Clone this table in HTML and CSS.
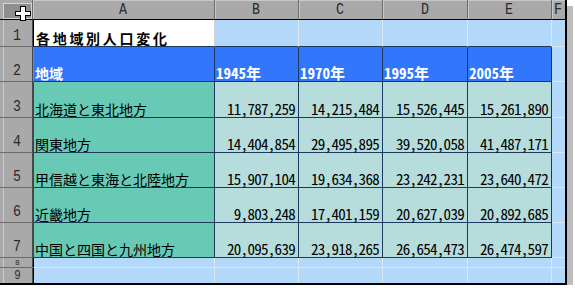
FILE: index.html
```html
<!DOCTYPE html>
<html lang="ja">
<head>
<meta charset="utf-8">
<title>各地域別人口変化</title>
<link rel="stylesheet" href="styles.css">
</head>
<body>
<div class="sheet">
  <div class="corner"><div class="corner-btn"></div></div>
  <div class="ch"><span class="hd">A</span></div>
  <div class="ch"><span class="hd">B</span></div>
  <div class="ch"><span class="hd">C</span></div>
  <div class="ch"><span class="hd">D</span></div>
  <div class="ch"><span class="hd">E</span></div>
  <div class="ch ch-last"><span class="hd">F</span></div>

  <div class="rh"><span class="hd">1</span></div>
  <div class="c a1 title">各地域別人口変化</div>
  <div class="c b1"></div>
  <div class="c b1"></div>
  <div class="c b1"></div>
  <div class="c b1"></div>
  <div class="c f"></div>

  <div class="rh"><span class="hd">2</span></div>
  <div class="c th th-a">地域</div>
  <div class="c th num-h">1945年</div>
  <div class="c th num-h">1970年</div>
  <div class="c th num-h">1995年</div>
  <div class="c th num-h">2005年</div>
  <div class="c f"></div>

  <div class="rh"><span class="hd">3</span></div>
  <div class="c ra">北海道と東北地方</div>
  <div class="c rn">11,787,259</div>
  <div class="c rn">14,215,484</div>
  <div class="c rn">15,526,445</div>
  <div class="c rn">15,261,890</div>
  <div class="c f"></div>

  <div class="rh"><span class="hd">4</span></div>
  <div class="c ra">関東地方</div>
  <div class="c rn">14,404,854</div>
  <div class="c rn">29,495,895</div>
  <div class="c rn">39,520,058</div>
  <div class="c rn">41,487,171</div>
  <div class="c f"></div>

  <div class="rh"><span class="hd">5</span></div>
  <div class="c ra">甲信越と東海と北陸地方</div>
  <div class="c rn">15,907,104</div>
  <div class="c rn">19,634,368</div>
  <div class="c rn">23,242,231</div>
  <div class="c rn">23,640,472</div>
  <div class="c f"></div>

  <div class="rh"><span class="hd">6</span></div>
  <div class="c ra">近畿地方</div>
  <div class="c rn">9,803,248</div>
  <div class="c rn">17,401,159</div>
  <div class="c rn">20,627,039</div>
  <div class="c rn">20,892,685</div>
  <div class="c f"></div>

  <div class="rh"><span class="hd">7</span></div>
  <div class="c ra">中国と四国と九州地方</div>
  <div class="c rn">20,095,639</div>
  <div class="c rn">23,918,265</div>
  <div class="c rn">26,654,473</div>
  <div class="c rn">26,474,597</div>
  <div class="c f"></div>

  <div class="rh rh-short"><span class="hd">8</span></div>
  <div class="c ea"></div>
  <div class="c e"></div>
  <div class="c e"></div>
  <div class="c e"></div>
  <div class="c e"></div>
  <div class="c f"></div>

  <div class="rh rh-last"><span class="hd">9</span></div>
  <div class="c ea last"></div>
  <div class="c e last"></div>
  <div class="c e last"></div>
  <div class="c e last"></div>
  <div class="c e last"></div>
  <div class="c f last"></div>

  <svg class="cursor" width="16" height="15" viewBox="0 0 16 15" shape-rendering="crispEdges" aria-hidden="true">
    <rect x="5" y="0" width="6" height="15" fill="#000"/>
    <rect x="0" y="5" width="16" height="5" fill="#000"/>
    <rect x="6" y="1" width="4" height="13" fill="#fff"/>
    <rect x="1" y="6" width="14" height="3" fill="#fff"/>
  </svg>
</div>
</body>
</html>
```

FILE: styles.css
```css
* { box-sizing: border-box; }

html, body {
  margin: 0;
  padding: 0;
  background: #ffffff;
}

.sheet {
  position: relative;
  display: grid;
  grid-template-columns: 33px 182px 84px 84px 85px 84px 13px;
  grid-template-rows: 20px 27px 35px 36px 35px 35px 35px 35px 10px 15px;
  width: 567px;
  height: 285px;
  border-right: 2px solid #000;
  border-bottom: 2px solid #000;
  box-shadow: 6px 6px 0 #bdbdbd;
  background: #b4d8fa;
  font-family: "Noto Sans CJK JP", "Noto Sans", sans-serif;
  color: #000;
}

/* header cells */
.corner {
  background: #a9a9a9;
  border-right: 1px solid #6b6b6b;
  border-bottom: 1px solid #000;
  padding: 3px 1px 0 3px;
}
.corner-btn {
  width: 29px;
  height: 16px;
  border: 1px solid #d6d6d6;
  background: #8e8e8e;
}

.ch {
  background: #a9a9a9;
  border-right: 1px solid #6b6b6b;
  border-bottom: 1px solid #000;
  box-shadow: inset 1px 1px 0 #c9c9c9;
  display: flex;
  align-items: center;
  justify-content: center;
}
.ch-last { border-right: 0; }

.rh {
  background: #a9a9a9;
  border-right: 1px solid #4a4a4a;
  border-bottom: 1px solid #6b6b6b;
  box-shadow: inset 3px 0 0 #a9a9a9, inset 4px 0 0 #cbcbcb;
  display: flex;
  align-items: flex-end;
  justify-content: center;
  padding: 0 0 0 3px;
  overflow: hidden;
}
.rh-last { border-bottom: 0; }

.hd {
  display: inline-block;
  font-family: "Liberation Mono", "DejaVu Sans Mono", monospace;
  font-size: 17px;
  line-height: 19px;
  color: #2a2a2a;
  transform: scaleX(0.78);
}
.rh .hd { line-height: 20px; }
.rh-short .hd {
  font-size: 8px;
  line-height: 9px;
  transform: scaleX(1);
}
.rh-last .hd {
  font-size: 12px;
  line-height: 14px;
  transform: scaleX(0.9);
}

/* data cells */
.c {
  display: flex;
  align-items: flex-end;
  white-space: nowrap;
  font-size: 14px;
  line-height: 16px;
  border-right: 1px solid #dde6ee;
  border-bottom: 1px solid #dde6ee;
}

.a1 {
  background: #ffffff;
  border-left: 1px solid #000;
  border-right: 1px solid #d2d2d2;
  border-bottom: 1px solid #1c3a5e;
}
.title {
  font-weight: bold;
  letter-spacing: 2.7px;
  padding: 0 0 0 2px;
}
.b1 {
  background: #b4d8fa;
  border-bottom: 1px solid #1c3a5e;
}

.f {
  background: #b4d8fa;
  border-right: 0;
}

.th {
  background: #3276fc;
  color: #ffffff;
  font-weight: bold;
  border-right: 1px solid #1c3a5e;
  border-bottom: 1px solid #1c3a5e;
  padding: 0 0 0 1px;
}
.th-a {
  border-left: 1px solid #b07a3a;
  padding-left: 1px;
}
.num-h {
  font-size: 15px;
  line-height: 16px;
  font-feature-settings: "hwid" 1;
  padding-left: 1px;
}

.ra {
  background: #68cab4;
  border-left: 1px solid #2f4a55;
  border-right: 1px solid #1c3a5e;
  border-bottom: 1px solid #1c3a5e;
  padding: 0 0 0 1px;
}
.rn {
  background: #b6dcdc;
  border-right: 1px solid #1c3a5e;
  border-bottom: 1px solid #1c3a5e;
  justify-content: flex-end;
  font-size: 15px;
  line-height: 16px;
  letter-spacing: -0.7px;
  font-feature-settings: "hwid" 1;
  padding: 0 3px 0 0;
}

.ea {
  background: #b4d8fa;
  border-left: 1px solid #000;
}
.e { background: #b4d8fa; }
.last { border-bottom: 0; }

.cursor {
  position: absolute;
  left: 15px;
  top: 6px;
}
```
